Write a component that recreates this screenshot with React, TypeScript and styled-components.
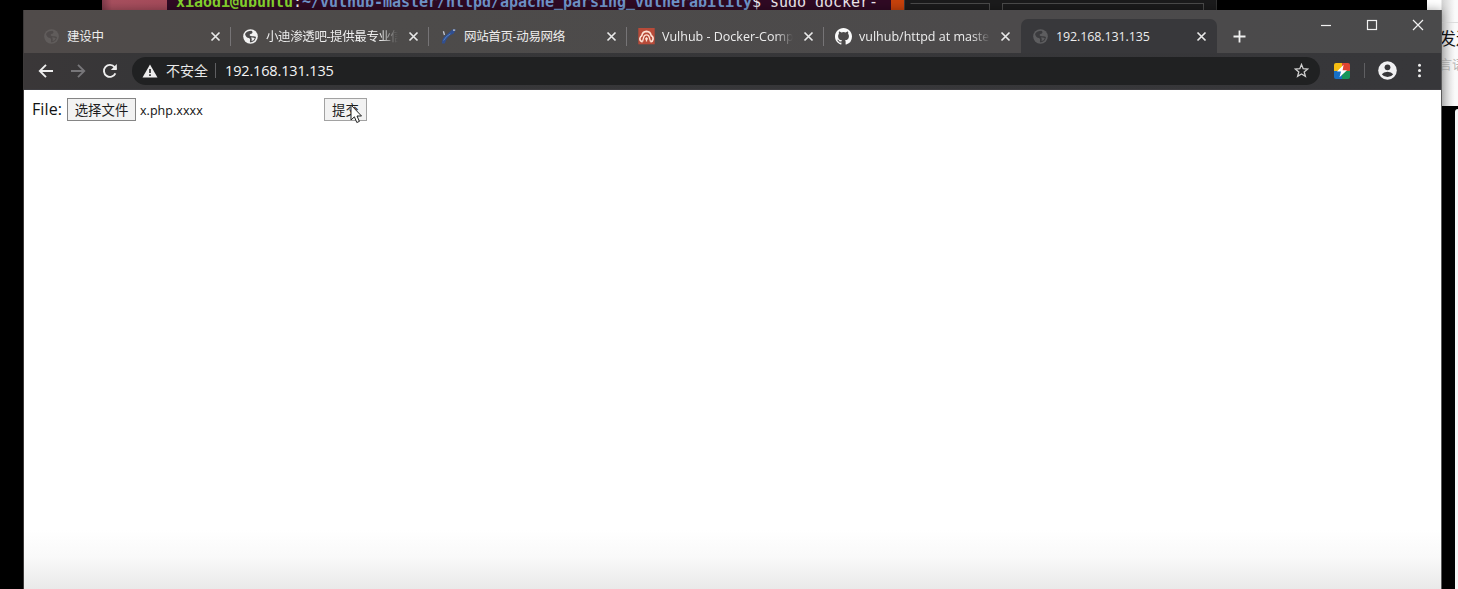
import React from "react";
import styled, { createGlobalStyle } from "styled-components";

const ui = `"Open Sans", "Noto Sans CJK SC", sans-serif`;

const GlobalStyle = createGlobalStyle`
  * { box-sizing: border-box; }
  body { margin: 0; background: #000; overflow: hidden; font-family: ${ui}; }
`;

const Desktop = styled.div`
  position: relative;
  width: 1458px;
  height: 589px;
  overflow: hidden;
  background: #000;
`;

const Terminal = styled.div`
  position: absolute;
  left: 102px;
  top: 0;
  width: 802px;
  height: 12px;
  display: flex;
  overflow: hidden;
  background: #300a24;
  border-right: 13px solid #c8420b;
`;

const Launcher = styled.div`
  width: 65px;
  flex: none;
  background: linear-gradient(90deg, #7e3a4a, #a8505f 15%, #a64b5b);
`;

const Prompt = styled.div`
  margin: -7px 0 0 7px;
  padding-left: 2px;
  font: 15px/18px "DejaVu Sans Mono", monospace;
  letter-spacing: -0.03px;
  white-space: pre;
  color: #f0eaf0;
`;

const Bold = styled.span<{ $color: string }>`
  font-weight: bold;
  color: ${(p) => p.$color};
`;

const DarkPanel = styled.div`
  position: absolute;
  left: 904px;
  top: 0;
  width: 313px;
  height: 12px;
  display: flex;
  gap: 12px;
  padding: 3px 13px 0 5px;
  background: #1b1b1c;
  border-left: 1px solid #3a3a3a;
  border-right: 1px solid #333;
`;

const Field = styled.div<{ $w: number }>`
  width: ${(p) => p.$w}px;
  flex: none;
  height: 14px;
  border: 1px solid #4b4b4b;
  border-left-color: ${(p) => (p.$w < 100 ? "transparent" : "#4b4b4b")};
`;

const Chat = styled.div`
  position: absolute;
  left: 1427px;
  top: 0;
  width: 31px;
  height: 106px;
  padding: 22px 0 0 12px;
  background: linear-gradient(90deg, #fff 14px, #d4d4d4 15px, #fafafa 28px);
  overflow: hidden;
  white-space: nowrap;
`;

const ChatName = styled.div`
  border-top: 1px solid #ddd;
  padding-top: 4px;
  font-size: 17px;
  line-height: 24px;
  color: #151515;
`;

const ChatNote = styled.div`
  margin-top: 3px;
  font-size: 13px;
  line-height: 20px;
  color: #b5b5b5;
`;

const ChatList = styled.div`
  position: absolute;
  left: 1455px;
  top: 109px;
  width: 3px;
  height: 480px;
  background: #f4f4f4;
  border-radius: 3px 0 0 0;
`;

const Window = styled.div`
  position: absolute;
  left: 23px;
  top: 10px;
  width: 1419px;
  height: 579px;
  display: flex;
  flex-direction: column;
  border-left: 1px solid #3d3a3a;
  border-right: 1px solid #5c5c5c;
  box-shadow: 0 0 10px rgba(0, 0, 0, 0.35);
`;

const TabStrip = styled.div`
  height: 43px;
  flex: none;
  display: flex;
  padding: 9px 0 0 8px;
  background: linear-gradient(90deg, #504b4a, #4d4b4a 25%, #4c4a4b 70%, #4a4a4b);
`;

const Tab = styled.div<{ $active?: boolean; $w?: number }>`
  position: relative;
  width: ${(p) => p.$w ?? 198}px;
  flex: none;
  height: 34px;
  display: flex;
  align-items: center;
  padding: 0 10px 0 11px;
  border-radius: 7px 7px 0 0;
  background: ${(p) => (p.$active ? "#38383b" : "transparent")};
`;

const Separator = styled.div`
  position: absolute;
  right: 0;
  top: 8px;
  width: 1px;
  height: 19px;
  background: #767476;
`;

const Favicon = styled.div<{ $dim?: number }>`
  width: 17px;
  height: 17px;
  flex: none;
  display: flex;
  opacity: ${(p) => p.$dim ?? 1};
`;

const TabTitle = styled.div<{ $spacing: number; $fade?: boolean }>`
  flex: 1;
  min-width: 0;
  overflow: hidden;
  white-space: nowrap;
  margin: 2px 10px 0 7px;
  font-size: 12.5px;
  line-height: 20px;
  letter-spacing: ${(p) => p.$spacing}px;
  color: #ededed;
  mask-image: ${(p) =>
    p.$fade ? "linear-gradient(90deg, #000 calc(100% - 18px), transparent)" : "none"};
`;

const Close = styled.svg`
  width: 11px;
  height: 11px;
  flex: none;
  stroke: #e8e8e8;
  stroke-width: 1.7;
  fill: none;
`;

const NewTab = styled.svg`
  margin: 10px 0 0 15px;
  width: 15px;
  height: 15px;
  stroke: #f0f0f0;
  stroke-width: 1.8;
`;

const Caption = styled.div`
  margin: -1px 17px 0 auto;
  display: flex;
  gap: 34px;
  svg {
    width: 12px;
    height: 14px;
    stroke: #f1f1f1;
    fill: none;
    stroke-width: 1.2;
  }
`;

const Toolbar = styled.div`
  height: 37px;
  flex: none;
  display: flex;
  align-items: center;
  padding: 0 15px 1px 14px;
  background: linear-gradient(90deg, #3a3738, #363638 10%, #37373a);
  border-bottom: 1px solid #403f43;
`;

const NavIcon = styled.svg<{ $color?: string }>`
  width: 16px;
  height: 16px;
  flex: none;
  margin-right: 16px;
  stroke: ${(p) => p.$color ?? "#eeeeee"};
  stroke-width: 1.9;
  fill: none;
`;

const Omnibox = styled.div`
  width: 1188px;
  height: 28px;
  margin-left: -2px;
  display: flex;
  align-items: center;
  padding: 0 11px 0 10px;
  border-radius: 14px;
  background: #202122;
  color: #e9e9e9;
`;

const Insecure = styled.span`
  margin-left: 8px;
  padding-right: 7px;
  font-size: 14px;
  line-height: 18px;
`;

const Bar = styled.span<{ $before?: number; $after?: number }>`
  width: 1px;
  height: 15px;
  margin: 0 ${(p) => p.$after ?? 0}px 0 ${(p) => p.$before ?? 0}px;
  background: #5f5f62;
`;

const Url = styled.span`
  flex: 1;
  margin-left: 9px;
  font-size: 14.5px;
  line-height: 20px;
  letter-spacing: -0.15px;
  color: #f4f4f4;
`;

const Actions = styled.div`
  display: flex;
  align-items: center;
  margin-left: 14px;
  svg { display: block; flex: none; }
`;

const MenuDots = styled.svg`
  width: 5px;
  height: 15px;
  margin-left: 20px;
  fill: #f0f0f0;
`;

const Page = styled.main`
  flex: 1;
  padding: 7px 8px;
  background: linear-gradient(#fff 440px, #f9f9f9 468px, #e9e9e9);
`;

const Form = styled.form`
  display: flex;
  align-items: center;
  height: 24px;
  color: #111;
`;

const FileLabel = styled.label`
  width: 35px;
  font-size: 16px;
  line-height: 22px;
  letter-spacing: 0.1px;
`;

const Button = styled.button<{ $w: number; $soft?: boolean }>`
  width: ${(p) => p.$w}px;
  height: 23px;
  padding: 1px 0 0;
  border: 1px solid ${(p) => (p.$soft ? "#a2a2a2" : "#858585")};
  border-radius: 0;
  background: #f2f2f2;
  font: 13.4px/20px ${ui};
  color: #1c1c1c;
`;

const FileName = styled.span`
  width: 188px;
  padding: 3px 0 0 4px;
  font-size: 12.5px;
  line-height: 18px;
  letter-spacing: 0.05px;
`;

const Pointer = styled.svg`
  position: absolute;
  left: 350px;
  top: 104px;
  width: 13px;
  height: 20px;
`;

const Globe = () => (
  <svg width="17" height="17" viewBox="0 0 17 17">
    <circle cx="8.5" cy="8.5" r="7.3" fill="#f1f1f1" />
    <path d="M3 6 Q4 10 7 10 Q8.5 10.5 8 12.5 Q7.5 14 8.5 14.5 Q13.5 13.5 14 9 Q12.5 8 10.5 8.3 Q8.5 8.5 7.5 7 Q8 5.5 10 5.5 Q11.5 4 9.5 2.8 Q5 2.8 3 6Z" fill="#4b4a4b" />
    <path d="M9 9.6 Q11.5 9.2 12.8 10.2 Q12 12.8 9.5 13 Q10.4 11 9 9.6Z" fill="#f1f1f1" />
  </svg>
);

const Swoosh = () => (
  <svg width="17" height="17" viewBox="0 0 17 17">
    <path d="M1.8 15.5 Q2 9 8 5.6 L12.5 1.5 L15.8 1.2 L13.8 5.6 Q9.5 7 7.6 10 Q5.5 12 4.8 15.5Z" fill="#304f91" />
    <path d="M3.6 12.5 Q6 8 10.4 5.8" stroke="#5f8fc8" strokeWidth="0.8" fill="none" />
    <path d="M3.4 3.2 L4.5 7 M13 2.2 L15.2 2.2" stroke="#c2c8d4" strokeWidth="1.3" />
  </svg>
);

const VulhubLogo = () => (
  <svg width="17" height="17" viewBox="0 0 17 17">
    <rect x=".3" y="0" width="16.4" height="16.3" fill="#b84b39" />
    <path d="M4.5 13.6H4Q1.6 13.2 1.9 10.4 Q2.4 8.2 3.8 7.7 Q4.5 3.6 8.5 3.4 Q12.5 3.6 13.2 7.7 Q15.3 8.4 15.1 11 Q14.7 13.4 13 13.6H12.5" fill="none" stroke="#ffe3d5" strokeWidth="1.6" />
    <path d="M4.5 13.6 L5.6 9.6 Q6.2 6.8 8.5 6.8 Q10.8 6.8 11.4 9.6 L12.5 13.6 M8.5 9.2 V13.6 M7 10.8 H10" fill="none" stroke="#ffe3d5" strokeWidth="1.3" />
  </svg>
);

const Octocat = () => (
  <svg width="17" height="17" viewBox="0 0 16 16">
    <path fill="#fafafa" d="M8 0C3.58 0 0 3.58 0 8c0 3.54 2.29 6.53 5.47 7.59.4.07.55-.17.55-.38 0-.19-.01-.82-.01-1.49-2.01.37-2.53-.49-2.69-.94-.09-.23-.48-.94-.82-1.13-.28-.15-.68-.52-.01-.53.63-.01 1.08.58 1.23.82.72 1.21 1.87.87 2.33.66.07-.52.28-.87.51-1.07-1.78-.2-3.64-.89-3.64-3.95 0-.87.31-1.59.82-2.15-.08-.2-.36-1.02.08-2.12 0 0 .67-.21 2.2.82a7.6 7.6 0 0 1 4 0c1.53-1.04 2.2-.82 2.2-.82.44 1.1.16 1.92.08 2.12.51.56.82 1.27.82 2.15 0 3.07-1.87 3.75-3.65 3.95.29.25.54.73.54 1.48 0 1.07-.01 1.93-.01 2.2 0 .21.15.46.55.38A8.01 8.01 0 0 0 16 8c0-4.42-3.58-8-8-8Z" />
  </svg>
);

type TabInfo = {
  title: string;
  icon: React.ReactNode;
  dim?: number;
  spacing?: number;
  fade?: boolean;
  active?: boolean;
  width?: number;
};

const tabs: TabInfo[] = [
  { title: "建设中", icon: <Globe />, dim: 0.1, width: 199, spacing: -0.3 },
  { title: "小迪渗透吧-提供最专业信息", icon: <Globe />, fade: true, spacing: -0.4 },
  { title: "网站首页-动易网络", icon: <Swoosh />, spacing: -0.35 },
  { title: "Vulhub - Docker-Compose file", icon: <VulhubLogo />, fade: true, width: 197 },
  { title: "vulhub/httpd at master · vulhub", icon: <Octocat />, fade: true, width: 197 },
  { title: "192.168.131.135", icon: <Globe />, dim: 0.2, active: true, width: 196, spacing: -0.12 },
];

export default function App() {
  return (
    <Desktop>
      <GlobalStyle />
      <Terminal>
        <Launcher />
        <Prompt>
          <Bold $color="#86d52f">xiaodi@ubuntu</Bold>:
          <Bold $color="#7196cc">~/vulhub-master/httpd/apache_parsing_vulnerability</Bold>$ sudo docker-
        </Prompt>
      </Terminal>
      <DarkPanel>
        <Field $w={80} />
        <Field $w={202} />
      </DarkPanel>
      <Chat>
        <ChatName>发送</ChatName>
        <ChatNote>言语</ChatNote>
      </Chat>
      <ChatList />
      <Window>
        <TabStrip>
          {tabs.map((t, i) => (
            <Tab key={t.title} $active={t.active} $w={t.width}>
              <Favicon $dim={t.dim}>{t.icon}</Favicon>
              <TabTitle $spacing={t.spacing ?? 0} $fade={t.fade}>{t.title}</TabTitle>
              <Close viewBox="0 0 11 11"><path d="M1.5 1.5 9.5 9.5M9.5 1.5 1.5 9.5" /></Close>
              {i < 4 && <Separator />}
            </Tab>
          ))}
          <NewTab viewBox="0 0 15 15"><path d="M7.5 1.5V13.5M1.5 7.5H13.5" /></NewTab>
          <Caption>
            <svg viewBox="0 0 12 14"><path d="M1 7.5H11" /></svg>
            <svg viewBox="0 0 12 14"><rect x="1.5" y="2.5" width="9" height="9" /></svg>
            <svg viewBox="0 0 12 14"><path d="M1 2 11 12M11 2 1 12" /></svg>
          </Caption>
        </TabStrip>
        <Toolbar>
          <NavIcon viewBox="0 0 16 16"><path d="M15 8H2M8 1.8 1.8 8 8 14.2" /></NavIcon>
          <NavIcon viewBox="0 0 16 16" $color="#777679"><path d="M1 8H14M8 1.8 14.2 8 8 14.2" /></NavIcon>
          <NavIcon viewBox="0 0 16 16"><path d="M13.4 10.4A6 6 0 1 1 12.6 4.1L14.2 5.8" /><path d="M14.8 1V7H8.8Z" fill="#eee" stroke="none" /></NavIcon>
          <Omnibox>
            <svg width="16" height="14" viewBox="0 0 16 14">
              <path d="M8 .5 15.5 13.5H.5Z" fill="#ededed" />
              <path d="M8 5V9M8 10.2V12" stroke="#202122" strokeWidth="1.6" />
            </svg>
            <Insecure>不安全</Insecure>
            <Bar />
            <Url>192.168.131.135</Url>
            <svg width="15" height="15" viewBox="0 0 15 15">
              <path d="M7.5 1.5 9.2 5.7 13.7 6 10.2 8.9 11.4 13.3 7.5 10.9 3.6 13.3 4.8 8.9 1.3 6 5.8 5.7Z" fill="none" stroke="#d0d0d0" strokeWidth="1.3" />
            </svg>
          </Omnibox>
          <Actions>
            <svg width="16" height="16" viewBox="0 0 16 16">
              <path d="M2 0H8V8H0V2Q0 0 2 0Z" fill="#f6bd11" />
              <path d="M8 0H14Q16 0 16 2V8H8Z" fill="#df4431" />
              <path d="M0 8H8V16H2Q0 16 0 14Z" fill="#176fc4" />
              <path d="M8 8H16V14Q16 16 14 16H8Z" fill="#17955a" />
              <path d="M9.6 1.8 3 8.4H7L5.5 14.2 13 7.2H8.6Z" fill="#fff" />
            </svg>
            <Bar $before={14} $after={13} />
            <svg width="19" height="19" viewBox="0 0 19 19">
              <circle cx="9.5" cy="9.5" r="9.3" fill="#f0f0f2" />
              <circle cx="9.5" cy="6.3" r="2.9" fill="#37373a" />
              <path d="M3.8 13.2Q5.5 10.7 9.5 10.7T15.2 13.2Q13.2 16.1 9.5 16.1T3.8 13.2Z" fill="#37373a" />
            </svg>
            <MenuDots viewBox="0 0 5 15">
              <circle cx="2.5" cy="2.3" r="1.5" />
              <circle cx="2.5" cy="7.5" r="1.5" />
              <circle cx="2.5" cy="12.7" r="1.5" />
            </MenuDots>
          </Actions>
        </Toolbar>
        <Page>
          <Form>
            <FileLabel>File:</FileLabel>
            <Button type="button" $w={69}>选择文件</Button>
            <FileName>x.php.xxxx</FileName>
            <Button type="button" $w={43} $soft>提交</Button>
          </Form>
        </Page>
      </Window>
      <Pointer viewBox="0 0 13 20">
        <path d="M1 1V16L4.4 12.8 6.8 18.5 9.4 17.4 7 12H11.5Z" fill="#fff" stroke="#222" strokeWidth="1" />
      </Pointer>
    </Desktop>
  );
}
